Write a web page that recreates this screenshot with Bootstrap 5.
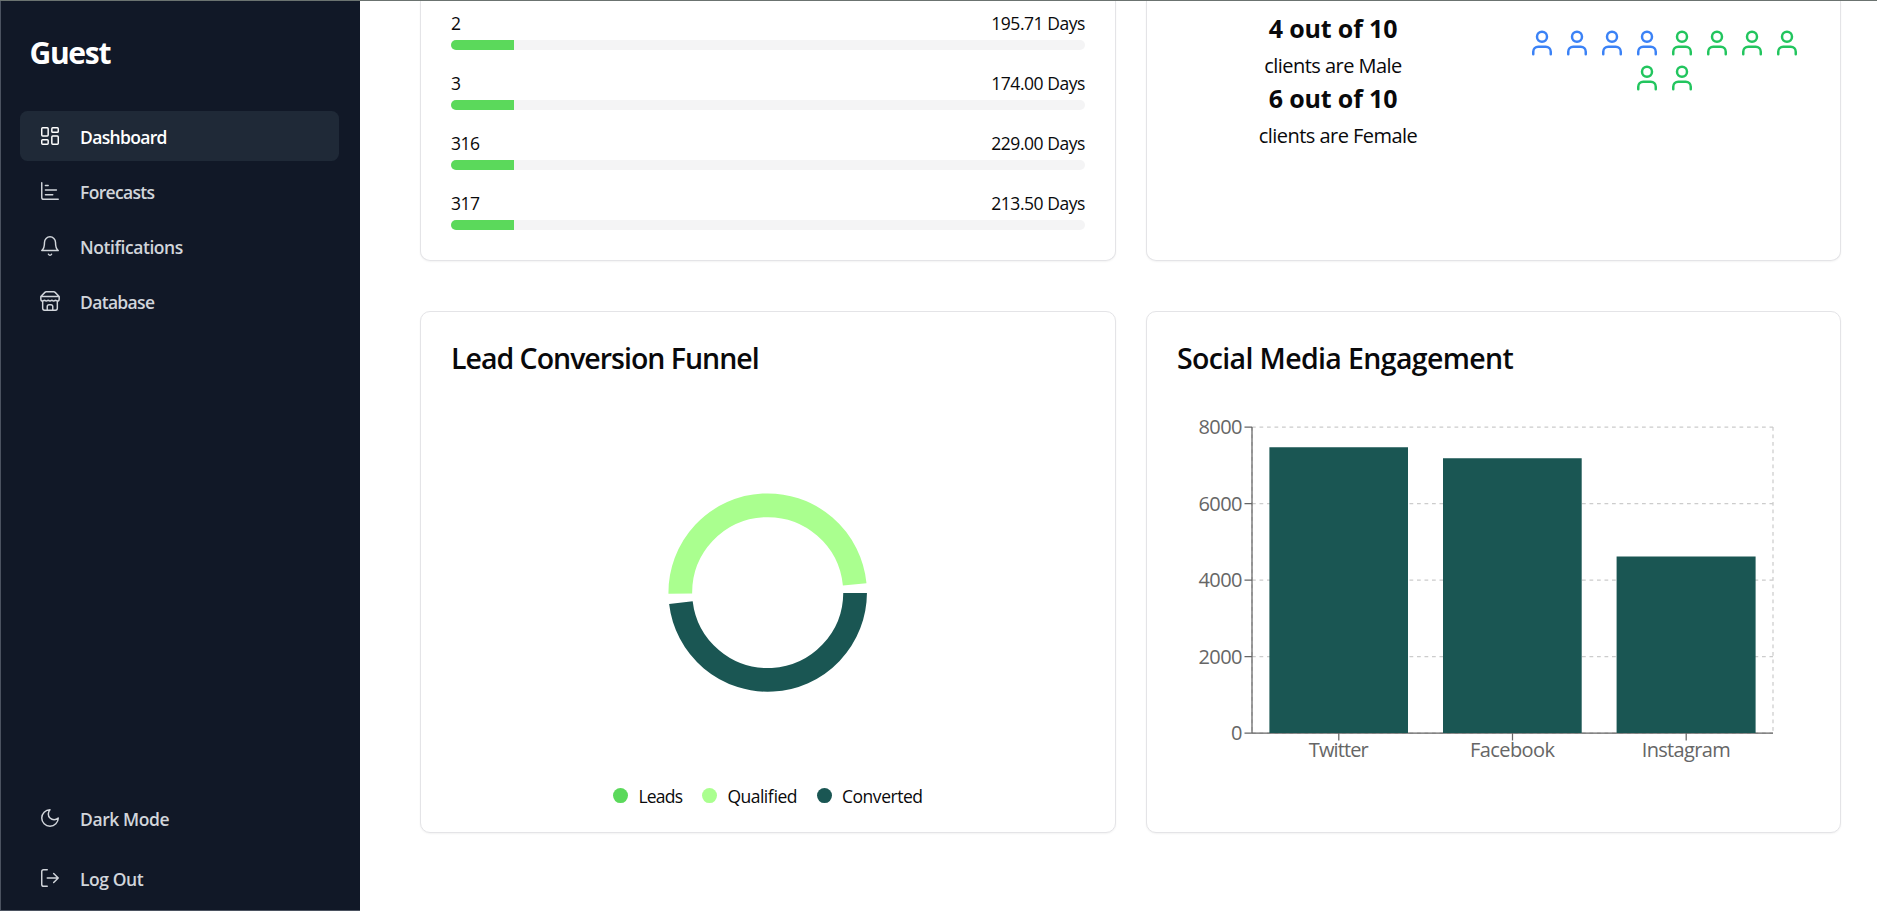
<!DOCTYPE html>
<html lang="en">
<head>
<meta charset="utf-8">
<meta name="viewport" content="width=device-width, initial-scale=1">
<title>Dashboard</title>
<link href="https://cdn.jsdelivr.net/npm/bootstrap@5.3.0/dist/css/bootstrap.min.css" rel="stylesheet">
<style>
  body { font-family: "Open Sans", "Noto Sans", sans-serif; font-size: 20px; color: #09090b; background: #fff; }
  .app-frame { border-top: 1px solid #6b7370; }
  .side-panel { width: 360px; background: #111827; border-left: 1px solid #4b5260; border-bottom: 1px solid #4b5260; padding: 32px 21px 0 19px; }
  .brand-name { font-size: 30px; line-height: 40px; padding-left: 9.5px; color: #fff; margin-bottom: 38px; letter-spacing: -1.3px; }
  .side-nav { gap: 5px; }
  .side-nav-end { gap: 10px; padding-bottom: 7px; }
  .side-link { height: 50px; padding: 0 19px; border-radius: 7.5px; color: #d1d5db; font-size: 17.5px; font-weight: 600; text-decoration: none; letter-spacing: -.67px; }
  .side-link span { padding-top: 2px; }
  .side-link.wide-label { letter-spacing: -.42px; }
  .side-link svg { width: 22px; height: 22px; margin-right: 19px; flex: none; }
  .side-link.current { background: #1f2937; color: #fff; }
  .stroke-icon { fill: none; stroke: currentColor; stroke-linecap: round; stroke-linejoin: round; stroke-width: 1.6; }
  .content-area { padding: 0 36px 0 60px; }
  .panel-grid { display: grid; grid-template-columns: 696px 695px; column-gap: 30px; row-gap: 50px; }
  .panel { border: 1px solid #e4e4e7; border-radius: 10px; background: #fff; box-shadow: 0 1px 2px rgba(0,0,0,.05); }
  .panel-cut { height: 260px; border-top: 0; border-radius: 0 0 10px 10px; }
  .panel-full { height: 522px; }
  .panel-title { font-size: 28.5px; line-height: 30px; font-weight: 600; margin: 0; padding: 31px 30px 0; letter-spacing: -.64px; }
  .panel-title.tight { letter-spacing: -1px; }
  .durations { padding: 10px 30px 0; }
  .duration { height: 60px; font-size: 17.5px; letter-spacing: -.45px; }
  .duration-text { line-height: 25px; height: 29px; }
  .track { height: 10px; border-radius: 5px; background: #f4f4f5; overflow: hidden; }
  .track > div { height: 100%; background: #5bd95b; }
  .ratio-col { width: 372px; padding-top: 10px; }
  .ratio-big { font-size: 25px; line-height: 35px; letter-spacing: -.15px; }
  .ratio-text { line-height: 35px; letter-spacing: -.55px; padding-top: 2px; height: 35px; }
  .ratio-text.shifted { padding-left: 10px; }
  .people { width: 290px; gap: 5px; padding-top: 27px; }
  .people svg { width: 30px; height: 30px; stroke-width: 2; }
  .male { color: #3b82f6; } .female { color: #22c55e; }
  svg text { font-family: "Open Sans", "Noto Sans", sans-serif; }
</style>
</head>
<body>
<svg class="d-none">
  <symbol id="person" viewBox="0 0 24 24"><path d="M19 21v-2a4 4 0 0 0-4-4H9a4 4 0 0 0-4 4v2"/><circle cx="12" cy="7" r="4"/></symbol>
</svg>
<div class="app-frame d-flex vh-100 overflow-hidden">
  <aside class="side-panel d-flex flex-column flex-shrink-0">
    <div class="brand-name fw-bold">Guest</div>
    <nav class="side-nav d-flex flex-column">
      <a class="side-link current d-flex align-items-center" href="#">
        <svg class="stroke-icon" viewBox="0 0 24 24"><rect x="3" y="3" width="7" height="9" rx="1"/><rect x="14" y="3" width="7" height="5" rx="1"/><rect x="14" y="12" width="7" height="9" rx="1"/><rect x="3" y="16" width="7" height="5" rx="1"/></svg>
        <span>Dashboard</span></a>
      <a class="side-link d-flex align-items-center" href="#">
        <svg class="stroke-icon" viewBox="0 0 24 24"><path d="M3 3v16a2 2 0 0 0 2 2h16M7 16h8M7 11h12M7 6h3"/></svg>
        <span>Forecasts</span></a>
      <a class="side-link wide-label d-flex align-items-center" href="#">
        <svg class="stroke-icon" viewBox="0 0 24 24"><path d="M6 8a6 6 0 0 1 12 0c0 7 3 9 3 9H3s3-2 3-9M10.3 21a1.94 1.94 0 0 0 3.4 0"/></svg>
        <span>Notifications</span></a>
      <a class="side-link d-flex align-items-center" href="#">
        <svg class="stroke-icon" viewBox="0 0 24 24"><path d="m2 7 4.41-4.41A2 2 0 0 1 7.83 2h8.34a2 2 0 0 1 1.42.59L22 7M4 12v8a2 2 0 0 0 2 2h12a2 2 0 0 0 2-2v-8M15 22v-4a2 2 0 0 0-2-2h-2a2 2 0 0 0-2 2v4M2 7h20M22 7v3a2 2 0 0 1-2 2a2.7 2.7 0 0 1-1.59-.63.7.7 0 0 0-.82 0A2.7 2.7 0 0 1 16 12a2.7 2.7 0 0 1-1.59-.63.7.7 0 0 0-.82 0A2.7 2.7 0 0 1 12 12a2.7 2.7 0 0 1-1.59-.63.7.7 0 0 0-.82 0A2.7 2.7 0 0 1 8 12a2.7 2.7 0 0 1-1.59-.63.7.7 0 0 0-.82 0A2.7 2.7 0 0 1 4 12a2 2 0 0 1-2-2V7"/></svg>
        <span>Database</span></a>
    </nav>
    <nav class="side-nav-end d-flex flex-column mt-auto">
      <a class="side-link wide-label d-flex align-items-center" href="#">
        <svg class="stroke-icon" viewBox="0 0 24 24"><path d="M12 3a6 6 0 0 0 9 9 9 9 0 1 1-9-9Z"/></svg>
        <span>Dark Mode</span></a>
      <a class="side-link wide-label d-flex align-items-center" href="#">
        <svg class="stroke-icon" viewBox="0 0 24 24"><path d="M9 21H5a2 2 0 0 1-2-2V5a2 2 0 0 1 2-2h4M16 17l5-5-5-5M21 12H9"/></svg>
        <span>Log Out</span></a>
    </nav>
  </aside>

  <main class="content-area flex-grow-1">
    <div class="panel-grid">
      <section class="panel panel-cut durations">
        <div class="duration"><div class="duration-text d-flex justify-content-between"><span>2</span><span>195.71 Days</span></div><div class="track"><div style="width:10%"></div></div></div>
        <div class="duration"><div class="duration-text d-flex justify-content-between"><span>3</span><span>174.00 Days</span></div><div class="track"><div style="width:10%"></div></div></div>
        <div class="duration"><div class="duration-text d-flex justify-content-between"><span>316</span><span>229.00 Days</span></div><div class="track"><div style="width:10%"></div></div></div>
        <div class="duration"><div class="duration-text d-flex justify-content-between"><span>317</span><span>213.50 Days</span></div><div class="track"><div style="width:10%"></div></div></div>
      </section>

      <section class="panel panel-cut d-flex align-items-start">
        <div class="ratio-col text-center">
          <div class="ratio-big fw-bold">4 out of 10</div>
          <div class="ratio-text">clients are Male</div>
          <div class="ratio-big fw-bold">6 out of 10</div>
          <div class="ratio-text shifted">clients are Female</div>
        </div>
        <div class="people d-flex flex-wrap justify-content-center">
          <svg class="stroke-icon male"><use href="#person"/></svg><svg class="stroke-icon male"><use href="#person"/></svg><svg class="stroke-icon male"><use href="#person"/></svg><svg class="stroke-icon male"><use href="#person"/></svg><svg class="stroke-icon female"><use href="#person"/></svg><svg class="stroke-icon female"><use href="#person"/></svg><svg class="stroke-icon female"><use href="#person"/></svg><svg class="stroke-icon female"><use href="#person"/></svg><svg class="stroke-icon female"><use href="#person"/></svg><svg class="stroke-icon female"><use href="#person"/></svg>
        </div>
      </section>

      <section class="panel panel-full">
        <h2 class="panel-title tight">Lead Conversion Funnel</h2>
        <svg class="d-block" width="694" height="459" viewBox="421 373 694 459">
          <g fill="none" stroke-width="23.7">
            <path stroke="#aaff8f" d="M854.7 584.4A87.4 87.4 0 0 0 680.3 593.7"/>
            <path stroke="#1a5653" d="M680.9 602.7A87.4 87.4 0 0 0 855.1 593"/>
          </g>
          <circle cx="620.5" cy="795.6" r="7.5" fill="#5bd95b"/><circle cx="709.5" cy="795.6" r="7.5" fill="#aaff8f"/><circle cx="824.5" cy="795.6" r="7.5" fill="#1a5653"/>
          <g font-size="17.5" fill="#09090b">
            <text x="638.5" y="803" textLength="44.5">Leads</text>
            <text x="727.5" y="803" textLength="70">Qualified</text>
            <text x="842" y="803" textLength="81">Converted</text>
          </g>
        </svg>
      </section>

      <section class="panel panel-full">
        <h2 class="panel-title">Social Media Engagement</h2>
        <svg class="d-block" width="693" height="459" viewBox="1147 373 693 459">
          <g stroke="#ccc" stroke-width="1.25" stroke-dasharray="3.75 3.75" fill="none">
            <path d="M1252 427H1773M1252 503.5H1773M1252 580H1773M1252 656.6H1773M1252 733H1773M1252 427V733M1773 427V733"/>
          </g>
          <g stroke="#666" stroke-width="1.25" fill="none">
            <path d="M1252 427V733M1252 733H1773M1244.5 427h7.5M1244.5 503.5h7.5M1244.5 580h7.5M1244.5 656.6h7.5M1244.5 733h7.5M1338.8 733v7.5M1512.5 733v7.5M1686.2 733v7.5"/>
          </g>
          <g fill="#1a5653"><path d="M1269.4 447.3h138.6v285.7h-138.6zM1443 458.3h138.7v274.7H1443zM1616.6 556.4h139v176.6h-139z"/></g>
          <g font-size="20" fill="#666" text-anchor="end">
            <text x="1242.5" y="434" textLength="44">8000</text><text x="1242.5" y="510.5" textLength="44">6000</text><text x="1242.5" y="587" textLength="44">4000</text><text x="1242.5" y="663.6" textLength="44">2000</text><text x="1242.5" y="740">0</text>
          </g>
          <g font-size="20" fill="#666" text-anchor="middle">
            <text x="1338.8" y="757" textLength="60">Twitter</text><text x="1512.5" y="757" textLength="85">Facebook</text><text x="1686.2" y="757" textLength="89">Instagram</text>
          </g>
        </svg>
      </section>
    </div>
  </main>
</div>
<script src="https://cdn.jsdelivr.net/npm/bootstrap@5.3.0/dist/js/bootstrap.bundle.min.js"></script>
</body>
</html>
